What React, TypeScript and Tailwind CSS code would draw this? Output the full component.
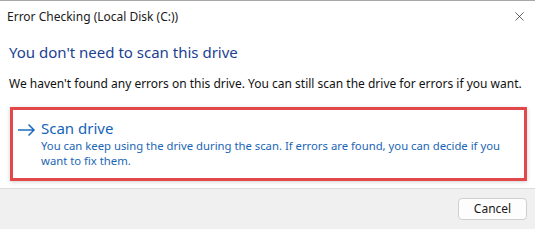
import { X } from 'lucide-react';

export default function App() {
  return (
    <div
      className="w-[535px] h-[229px] bg-white flex flex-col border-t border-[#a8a8a8] overflow-hidden"
      style={{ fontFamily: '"Noto Sans", "Open Sans", sans-serif' }}
    >
      {/* title bar */}
      <div className="h-[31px] flex items-center justify-between pl-[7px] pr-[4px]">
        <span className="text-[12px] text-[#1a1a1a] leading-none">Error Checking (Local Disk (C:))</span>
        <X className="size-[15px] text-[#222] mr-[4px]" strokeWidth={1.1} />
      </div>

      <div className="flex flex-col px-[9px]">
        <h1 className="mt-[10px] text-[15px] leading-[20px] text-[#1c3f94] font-normal">
          You don't need to scan this drive
        </h1>
        <p className="mt-[14px] text-[12px] leading-[16px] text-[#111]">
          We haven't found any errors on this drive. You can still scan the drive for errors if you want.
        </p>

        <div className="mt-[15px] ml-[1px] w-[517px] h-[74px] border-[3px] border-[#e2474a] bg-white shadow-[0_1px_4px_rgba(0,0,0,0.18)] flex items-start pt-[8px] pl-[4px]">
          <svg width="20" height="14" viewBox="0 0 20 14" className="mt-[5px] shrink-0 text-[#1a6cc4]">
            <path d="M1 7 H17 M11.5 1.5 L17 7 L11.5 12.5" fill="none" stroke="currentColor" strokeWidth="1.5" />
          </svg>
          <div className="ml-[4px] flex flex-col">
            <span className="text-[15px] leading-[20px] text-[#1463b8]">Scan drive</span>
            <span className="text-[11.3px] leading-[15px] text-[#1a66b6] w-[470px]">
              You can keep using the drive during the scan. If errors are found, you can decide if you want to fix
              them.
            </span>
          </div>
        </div>
      </div>

      {/* footer */}
      <div className="mt-auto h-[41px] bg-[#f0f0f0] border-t border-[#dcdcdc] flex items-center justify-end pr-[8px]">
        <button className="w-[69px] h-[22px] bg-[#fdfdfd] border border-[#cfcfcf] rounded-[4px] text-[12px] text-[#1a1a1a] leading-none">
          Cancel
        </button>
      </div>
    </div>
  );
}
